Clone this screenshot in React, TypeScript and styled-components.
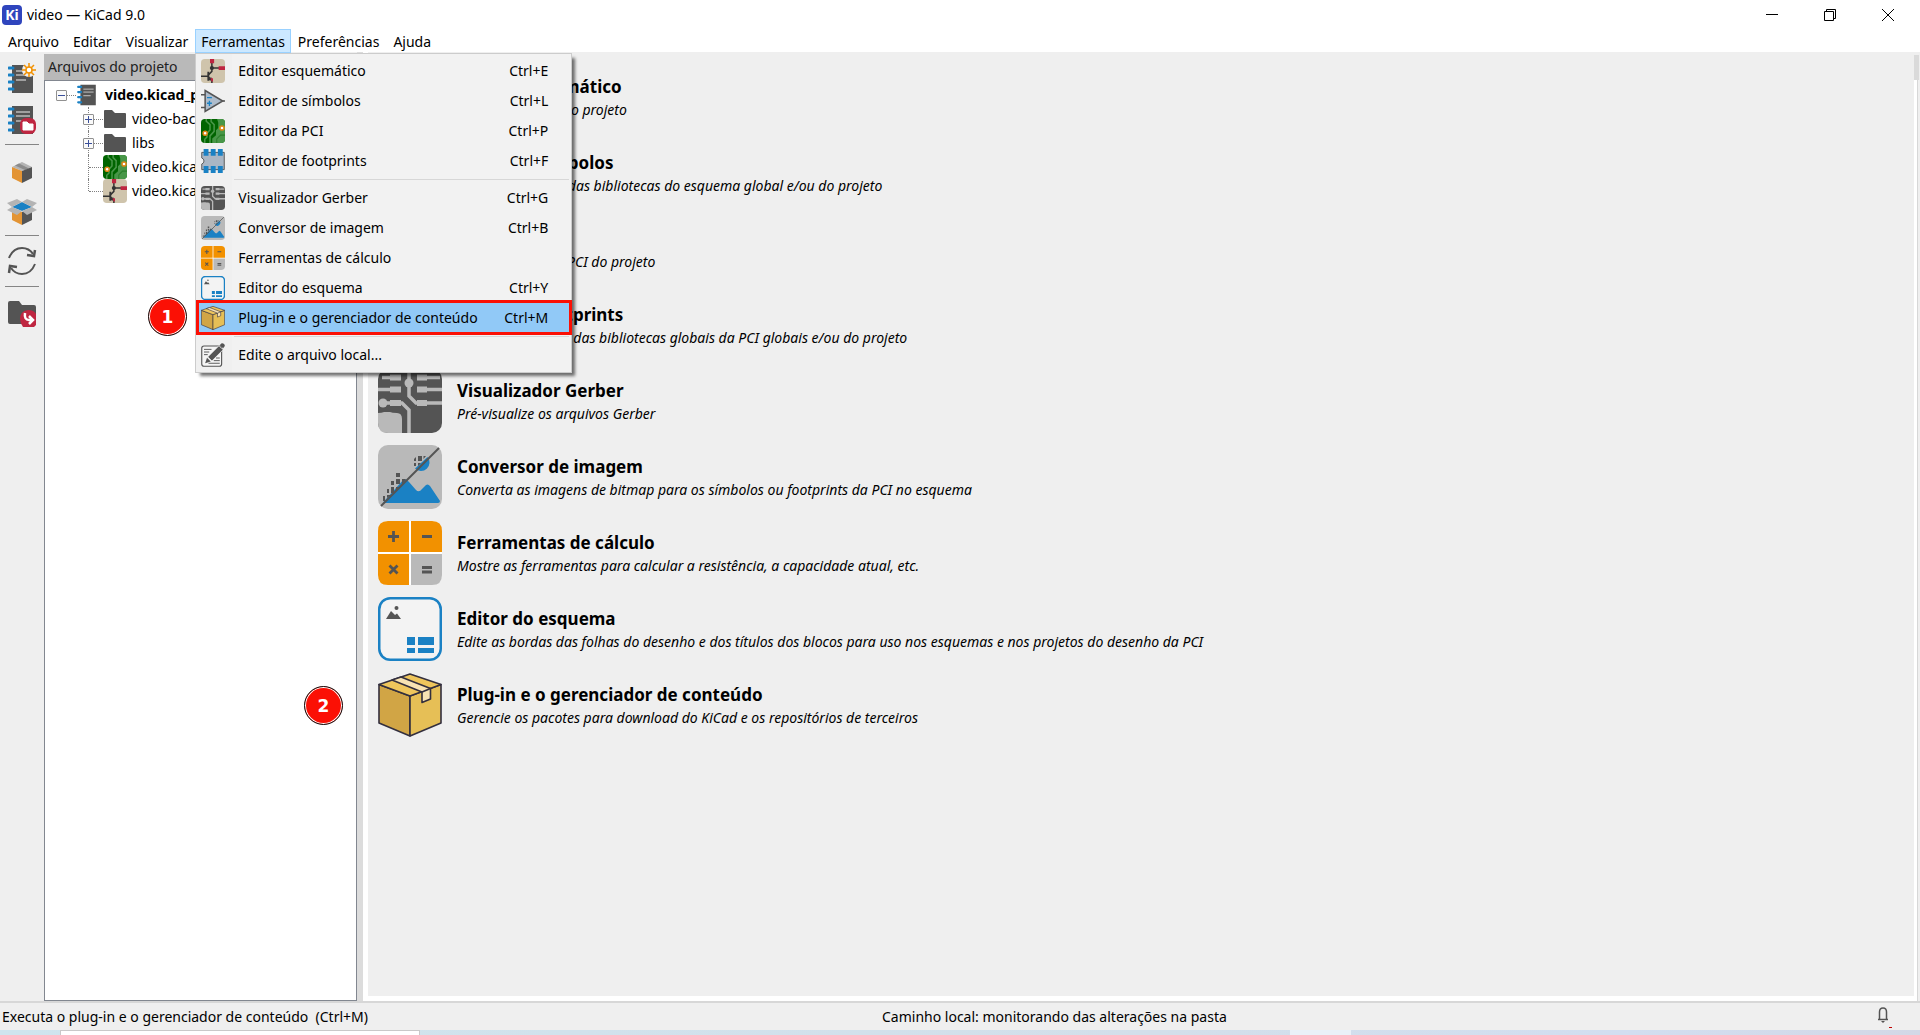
import React from "react";
import styled, { createGlobalStyle, css } from "styled-components";

const GlobalStyle = createGlobalStyle`
  * { box-sizing: border-box; }
  body {
    margin: 0;
    background: #efefef;
    color: #000;
    font-family: "Noto Sans", "Open Sans", sans-serif;
    font-size: 14px;
    line-height: 20px;
  }
  button { font: inherit; color: inherit; border: 0; padding: 0; background: none; text-align: left; }
  ul { list-style: none; margin: 0; padding: 0; }
  svg { display: block; flex: none; }
`;

/* ---------- icons ---------- */

type IconProps = { size?: number };
const DARK = "#545454";
const BLUE = "#1a81c4";
const RED = "#bf2641";
const ORANGE = "#f29100";
const GREY = "#b9b9b9";

const Svg64 = ({ size = 24, children }: IconProps & { children: React.ReactNode }) => (
  <svg width={size} height={size} viewBox="0 0 64 64" aria-hidden="true">
    {children}
  </svg>
);

const SchematicIcon = ({ size }: IconProps) => (
  <Svg64 size={size}>
    <rect width="64" height="64" rx="10" fill="#cfc4ac" />
    <path d="M29 8V33L19 43M29 24H50M0 46H19M20 48L29 57V64" fill="none" stroke="#333" strokeWidth="4" />
    <path d="M19.500 34V58" stroke="#333" strokeWidth="5" />
    <path d="M30 58L19 56L27 48Z" fill="#333" />
    <circle cx="29" cy="24" r="5.500" fill="#333" />
    <path d="M24 0H35V11H24ZM47 19H64V29H47ZM25 51H32V60H28Z" fill={RED} />
  </Svg64>
);

const SymbolIcon = ({ size }: IconProps) => (
  <Svg64 size={size}>
    <path d="M0 15H12M0 49H12M58 32H64" stroke={DARK} strokeWidth="4" />
    <path d="M11 4L58 32L11 60Z" fill="#aebccb" stroke={DARK} strokeWidth="4" />
    <path d="M16 23H29M16 38H29M22.500 31V45" stroke={BLUE} strokeWidth="3.500" />
  </Svg64>
);

const PcbIcon = ({ size }: IconProps) => (
  <Svg64 size={size}>
    <rect width="64" height="64" rx="10" fill="#006400" />
    <path d="M43 0H54Q64 0 64 10V54Q64 64 54 64H30V52L40 43V30L46 24V10Z" fill="#489648" />
    <path d="M14 0V6L24 15V29L16 38V48L10 54V64M27 0V7L35 15V33L24 45V64" fill="none" stroke="#489648" strokeWidth="4" />
    <path d="M64 43H52L42 53V64" fill="none" stroke="#2b7f2b" strokeWidth="3" />
    <circle cx="56" cy="24" r="5.500" fill="#fff" stroke="#dd8716" strokeWidth="4" />
    <circle cx="11" cy="38" r="5.500" fill="#fff" stroke="#dd8716" strokeWidth="4" />
  </Svg64>
);

const FootprintIcon = ({ size }: IconProps) => (
  <Svg64 size={size}>
    <path d="M2 9H62V55H2V40Q8 38 8 32Q8 26 2 24Z" fill="#aab6c4" stroke={DARK} strokeWidth="2.500" />
    <path d="M7 0H20V18H7ZM26 0H39V18H26ZM45 0H58V18H45ZM7 45H20V64H7ZM26 45H39V64H26ZM45 45H58V64H45Z" fill={BLUE} />
  </Svg64>
);

const GerberIcon = ({ size }: IconProps) => (
  <Svg64 size={size}>
    <rect width="64" height="64" rx="10" fill={DARK} />
    <path d="M0 44Q4 44 6 43H12Q14 44 19 44Q24 44 24 50V64H10Q0 64 0 54Z" fill={GREY} />
    <path d="M0 20.500H14M4 8.500H14M4 34H24L31 41V64M31 0V27L38 34H64M46 20.500H64M46 8.500H62" fill="none" stroke={GREY} strokeWidth="3.500" />
    <path d="M12 5.500H23V11.500H12ZM12 17.500H23V23.500H12ZM12 31H23V37H12ZM39 5.500H49V11.500H39ZM39 17.500H49V23.500H39ZM39 31H49V37H39Z" fill={GREY} />
    <circle cx="31" cy="14" r="4.500" fill={GREY} />
    <circle cx="5" cy="34" r="4.500" fill={GREY} />
  </Svg64>
);

const ConverterIcon = ({ size }: IconProps) => (
  <Svg64 size={size}>
    <rect width="64" height="64" rx="10" fill={GREY} />
    <path d="M5 57.500L26 34Q29 34 31 37L38 45Q41 48 44 44L48 40Q50 38.500 52 41L62 56Q62 58 60 58H6Z" fill={BLUE} />
    <path d="M49.500 12A8.500 8.500 0 0 1 37 23.500Z" fill={BLUE} />
    <path
      d="M36 14L38 12V16H36ZM40 11H44V16H40ZM45.500 11H48L45.500 14ZM36 18H38V21H36ZM40 18H43L40 21ZM18 28H22V32H18ZM18 34H22V39H18ZM24 34H28L24 39ZM13 36H16V40H13ZM13 42H16V48H13ZM18 42H22L18 46ZM9 44H11V48H9ZM9 50H13L9 53ZM5 51H7V56H5Z"
      fill={DARK}
    />
    <path d="M3 61L61 3" stroke={DARK} strokeWidth="2" />
  </Svg64>
);

const CalculatorIcon = ({ size }: IconProps) => (
  <Svg64 size={size}>
    <rect width="64" height="64" rx="10" fill="#fff" />
    <path d="M10 0H31V31H0V10Q0 0 10 0ZM33 0H54Q64 0 64 10V31H33ZM0 33H31V64H10Q0 64 0 54Z" fill={ORANGE} />
    <path d="M33 33H64V54Q64 64 54 64H33Z" fill={GREY} />
    <path
      d="M10 15.500H21M15.500 10V21M44 15.500H54M11.500 44.500L19.500 52.500M19.500 44.500L11.500 52.500M44 46.500H54M44 51H54"
      stroke={DARK}
      strokeWidth="2.800"
    />
  </Svg64>
);

const SheetIcon = ({ size }: IconProps) => (
  <Svg64 size={size}>
    <rect x="1.250" y="1.250" width="61.500" height="61.500" rx="11" fill="#f3f3f3" stroke={BLUE} strokeWidth={size === 24 ? 4 : 2.5} />
    <path d="M8 22L13 14L17 18L19 16.500L23 22Z" fill={DARK} />
    <circle cx="18.500" cy="11" r="2" fill={DARK} />
    <path d="M29 40H37V48H29ZM40 40H56V48H40ZM29 51H37V56H29ZM40 51H56V56H40Z" fill={BLUE} />
  </Svg64>
);

const PackageIcon = ({ size }: IconProps) => (
  <Svg64 size={size}>
    <g stroke="#332f3e" strokeWidth="1.600" strokeLinejoin="round">
      <path d="M1 11.500L32 23V63L1 50Z" fill="#d1a545" />
      <path d="M63 11.500L32 23V63L63 50Z" fill="#e6bf56" />
      <path d="M32 1L63 11.500L32 23L1 11.500Z" fill="#efc65c" />
      <path d="M14 7L23 4L52.500 15.500V26L44 29.500V19Z" fill="#f8e3b3" />
      <path d="M44 19L52.500 15.500" fill="none" />
    </g>
  </Svg64>
);

const EditFileIcon = ({ size }: IconProps) => (
  <Svg64 size={size}>
    <rect x="2" y="8" width="53" height="54" rx="6" fill="#f5f5f5" stroke={DARK} strokeWidth="3" />
    <path d="M8 17H28M8 24H22M8 31H18M40 40H50M34 47H50M20 54H50" stroke={DARK} strokeWidth="2.500" />
    <path d="M18 37L48 7L59 18L29 48Z" fill={DARK} stroke="#f5f5f5" strokeWidth="2" />
    <path d="M50 6L54 1Q58 -1 62 3Q65 7 62 10L59 14Z" fill={DARK} />
    <path d="M16 39L26 49L11 54Z" fill={DARK} />
  </Svg64>
);

const Notebook = () => (
  <>
    <path d="M4 1H25V29H4Z" fill={DARK} />
    <path d="M8 7H22M8 11H22M8 16H18" stroke="#ececec" strokeWidth="1" />
    <path d="M1 4H5M1 11H5M1 18H5M1 25H5" stroke={BLUE} strokeWidth="3" strokeLinecap="round" />
  </>
);

const ProjectIcon = () => (
  <svg width="20" height="22" viewBox="0 0 26 30" aria-hidden="true">
    <Notebook />
  </svg>
);

const NewProjectIcon = () => (
  <svg width="28" height="32" viewBox="0 0 28 32" aria-hidden="true">
    <g transform="translate(0 2)"><Notebook /></g>
    <circle cx="21" cy="8" r="7" fill="#efefef" />
    <path d="M21 1V15M14 8H28M16 3L26 13M26 3L16 13" stroke={ORANGE} strokeWidth="1.500" />
    <circle cx="21" cy="8" r="3" fill="#fff" stroke={ORANGE} strokeWidth="1.500" />
  </svg>
);

const OpenProjectIcon = () => (
  <svg width="28" height="32" viewBox="0 0 28 32" aria-hidden="true">
    <g transform="translate(0 2)"><Notebook /></g>
    <rect x="12" y="15" width="16" height="16" rx="6" fill={RED} />
    <path d="M15 19H19L21 21H25V27H15Z" fill="#fff" stroke="#fff" strokeLinejoin="round" />
  </svg>
);

const ArchiveIcon = () => (
  <svg width="22" height="22" viewBox="0 0 22 22" aria-hidden="true">
    <path d="M11 1L21 6L11 10L1 6Z" fill="#b4b4b4" />
    <path d="M4 4.500L8 2.500L18 7.500L14 9Z" fill="#8b8b8b" />
    <path d="M1 6L11 10V22L1 17Z" fill="#e39434" />
    <path d="M21 6L11 10V22L21 17Z" fill={DARK} />
  </svg>
);

const UnarchiveIcon = () => (
  <svg width="30" height="26" viewBox="0 0 30 26" aria-hidden="true">
    <path d="M5 10L15 13V26L5 21Z" fill="#e39434" />
    <path d="M25 10L15 13V26L25 21Z" fill={DARK} />
    <path d="M15 3L25 8L15 12L5 8Z" fill={BLUE} />
    <path d="M5 8L0 4L10 0L15 3ZM25 8L30 4L20 0L15 3ZM5 8L15 12L10 16L0 11ZM25 8L15 12L20 16L30 11Z" fill="#b4b4b4" />
  </svg>
);

const RefreshIcon = () => (
  <svg width="30" height="30" viewBox="0 0 30 30" aria-hidden="true" fill="none" stroke={DARK} strokeWidth="2">
    <path d="M2 12Q6 2 15 2Q22 2 26 8M28 18Q24 28 15 28Q8 28 4 22" />
    <path d="M28 4L27 10L20 9M2 27L3 20L10 21" strokeWidth="2.500" />
  </svg>
);

const BrowseIcon = () => (
  <svg width="30" height="28" viewBox="0 0 30 28" aria-hidden="true">
    <path d="M1 3Q1 1 3 1H12L15 5H27Q29 5 29 7V22Q29 24 27 24H3Q1 24 1 22Z" fill={DARK} />
    <path d="M16 27Q13 23 13 18.500Q13 11 21 10Q27 10 29 14V25L27 27Z" fill={RED} />
    <path d="M18 13Q17 20 22 20H25M22 16L26 20L22 24" fill="none" stroke="#fff" strokeWidth="2.500" />
  </svg>
);

const FolderIcon = () => (
  <svg width="24" height="24" viewBox="0 0 24 24" aria-hidden="true">
    <path d="M1 4Q1 3 2 3H9L12 6H22Q23 6 23 7V20Q23 21 22 21H2Q1 21 1 20Z" fill={DARK} />
  </svg>
);

const BellIcon = () => (
  <svg width="12" height="16" viewBox="0 0 12 16" aria-hidden="true">
    <path d="M2.500 12V5Q2.500 1 6 1Q9.500 1 9.500 5V12M1 12.500H11" fill="none" stroke={DARK} strokeWidth="1.500" />
    <path d="M4 14H8L6 16Z" fill={DARK} />
  </svg>
);

/* ---------- window frame ---------- */

const Window = styled.div`
  min-height: 100vh;
  display: flex;
  flex-direction: column;
`;

const TitleBar = styled.header`
  height: 29px;
  padding: 0 3px 0 2px;
  background: #fff;
  display: flex;
  align-items: center;
`;

const AppLogo = styled.span`
  width: 20px;
  height: 20px;
  border-radius: 4px;
  background: #2f45bd;
  color: #fff;
  font-size: 14px;
  line-height: 20px;
  font-weight: 700;
  text-align: center;
`;

const WindowTitle = styled.h1`
  flex: 1;
  margin: 0 0 0 5px;
  font-size: 14px;
  font-weight: 400;
`;

const CaptionButton = styled.button`
  width: 58px;
  height: 29px;
  display: grid;
  place-items: center;
`;

const MenuBar = styled.nav`
  height: 23px;
  padding-left: 1px;
  background: #fff;
  display: flex;
  align-items: flex-start;
`;

const MenuSlot = styled.div`
  position: relative;
`;

const MenuTitle = styled.button<{ $open?: boolean }>`
  height: 24px;
  padding: 1px ${(p) => (p.$open ? 5 : 6)}px 0;
  border: 1px solid transparent;
  ${(p) => p.$open && css`background: #cce8ff; border-color: #99d1ff;`}
`;

/* ---------- drop-down menu ---------- */

const Menu = styled.div`
  position: absolute;
  top: 24px;
  left: 0;
  z-index: 10;
  width: 377px;
  padding: 2px;
  border: 1px solid #ccc;
  background: linear-gradient(90deg, #f0f0f0 36px, #f2f2f2 36px);
  box-shadow: 4px 4px 3px -1px rgba(0, 0, 0, 0.55);
`;

const MenuItem = styled.button<{ $active?: boolean }>`
  position: relative;
  width: 100%;
  height: 30px;
  padding: 0 21px 0 3px;
  display: flex;
  align-items: center;
  gap: 13px;
  white-space: nowrap;
  ${(p) => p.$active && css`background: #91c9f7;`}
`;

const MenuLabel = styled.span`
  flex: 1;
`;

const MenuRule = styled.hr`
  height: 1px;
  margin: 3px 0 3px 36px;
  border: 0;
  background: #d7d7d7;
`;

const Highlight = styled.span`
  position: absolute;
  inset: -3px -3px -2px -2px;
  border: 3px solid #fb1005;
`;

const Badge = styled.span<{ $left: number; $top: number }>`
  position: absolute;
  left: ${(p) => p.$left}px;
  top: ${(p) => p.$top}px;
  z-index: 11;
  width: 39px;
  height: 39px;
  border: 1px solid #111;
  border-radius: 50%;
  background: #fb1005;
  box-shadow: inset 0 0 0 1px #fff;
  color: #fff;
  font-family: "DejaVu Sans", sans-serif;
  font-size: 17px;
  line-height: 38px;
  font-weight: 700;
  text-align: center;
`;

/* ---------- body ---------- */

const Body = styled.div`
  position: relative;
  flex: 1;
  display: flex;
`;

const ToolBar = styled.div`
  width: 44px;
  padding-top: 10px;
  display: flex;
  flex-direction: column;
  align-items: center;
`;

const Tool = styled.button<{ $height: number; $top?: boolean }>`
  height: ${(p) => p.$height}px;
  display: grid;
  place-items: ${(p) => (p.$top ? "start" : "center")} center;
`;

const ToolRule = styled.hr`
  width: 34px;
  height: 1px;
  margin: 0;
  border: 0;
  background: #858585;
`;

const ProjectPane = styled.aside`
  width: 313px;
  padding-top: 2px;
  display: flex;
  flex-direction: column;
`;

const PaneTitle = styled.h2`
  height: 26px;
  margin: 0;
  padding-left: 4px;
  background: #b9b9b9;
  color: #222;
  font-size: 14px;
  line-height: 26px;
  font-weight: 400;
`;

const Tree = styled.ul`
  flex: 1;
  && { padding: 2px 0; }
  border: 1px solid #828790;
  background: #fff;
  overflow: hidden;
`;

const TreeRow = styled.li<{ $root?: boolean }>`
  height: 24px;
  padding-left: ${(p) => (p.$root ? 11 : 38)}px;
  display: flex;
  align-items: center;
  white-space: nowrap;
  font-weight: ${(p) => (p.$root ? 700 : 400)};
`;

const Branch = styled.span<{ $child?: boolean; $last?: boolean }>`
  position: relative;
  width: 11px;
  height: 24px;
  display: grid;
  place-items: center;
  &::before {
    content: "";
    display: ${(p) => (p.$child ? "block" : "none")};
    position: absolute;
    left: 5px;
    top: 0;
    height: ${(p) => (p.$last ? 12 : 24)}px;
    border-left: 1px dotted #808080;
  }
`;

const Toggle = styled.button`
  position: relative;
  width: 11px;
  height: 11px;
  display: grid;
  place-items: center;
  border: 1px solid #919191;
  border-radius: 1px;
  background: #fafafa;
`;

const Twig = styled.span<{ $long?: boolean }>`
  width: ${(p) => (p.$long ? 14 : 9)}px;
  margin-left: ${(p) => (p.$long ? -5 : 0)}px;
  border-top: 1px dotted #808080;
`;

const TreeLabel = styled.span<{ $root?: boolean }>`
  margin-left: ${(p) => (p.$root ? 8 : 5)}px;
`;

const RootIcon = styled.span`
  margin-left: 1px;
`;

const Splitter = styled.div`
  width: 6px;
  background: #dcdcdc;
`;

const Launcher = styled.main`
  flex: 1;
  padding: 13px 10px;
  border: solid #fff;
  border-width: 0 0 5px 5px;
  background: #efefef;
  display: flex;
  flex-direction: column;
  gap: 12px;
`;

const LaunchButton = styled.button`
  display: flex;
  align-items: center;
  gap: 15px;
  white-space: nowrap;
`;

const LaunchText = styled.span`
  display: flex;
  flex-direction: column;
  padding-top: 2px;
`;

const LaunchTitle = styled.strong`
  font-size: 17px;
  line-height: 24px;
`;

const LaunchNote = styled.em`
  line-height: 22px;
`;

const EdgeBar = styled.div`
  width: 6px;
  padding-top: 3px;
  display: flex;
  flex-direction: column;
`;

const EdgeThumb = styled.div`
  width: 5px;
  height: 25px;
  background: #dadada;
`;

const EdgeTrack = styled.div`
  flex: 1;
  width: 4px;
  border-right: 1px solid #d7d7d7;
  background: #fff;
`;

/* ---------- footer ---------- */

const StatusBar = styled.footer`
  height: 29px;
  padding: 1px 31px 0 2px;
  border-top: 2px solid #d7d7d7;
  display: grid;
  grid-template-columns: 880px 1fr auto;
  align-items: center;
  white-space: pre;
`;

const Alerts = styled.button`
  position: relative;
  top: -2px;
  &::after {
    content: "";
    position: absolute;
    right: -3px;
    bottom: -5px;
    width: 3px;
    height: 1px;
    background: #c00000;
  }
`;

const TaskStrip = styled.div`
  height: 5px;
  padding-left: 60px;
  display: flex;
  background: linear-gradient(90deg, #cfe5ee, #d3dfea 60%, #d2def0 85%, #d3d8e6);
`;

const TaskField = styled.div`
  width: 360px;
  border: solid #c9c9c9;
  border-width: 1px 1px 0;
  background: #fff;
`;

const TaskActive = styled.div`
  width: 61px;
  margin-left: 870px;
  background: #eaf1f8;
`;

/* ---------- data ---------- */

const menuTitles = ["Arquivo", "Editar", "Visualizar", "Ferramentas", "Preferências", "Ajuda"];

type Entry = { icon: React.ComponentType<IconProps>; label: string; keys?: string; note?: string };

const tools: Entry[] = [
  { icon: SchematicIcon, label: "Editor esquemático", keys: "Ctrl+E", note: "Edite o esquema do projeto" },
  { icon: SymbolIcon, label: "Editor de símbolos", keys: "Ctrl+L", note: "Edite os símbolos das bibliotecas do esquema global e/ou do projeto" },
  { icon: PcbIcon, label: "Editor da PCI", keys: "Ctrl+P", note: "Edite o design da PCI do projeto" },
  { icon: FootprintIcon, label: "Editor de footprints", keys: "Ctrl+F", note: "Edite os footprints das bibliotecas globais da PCI globais e/ou do projeto" },
  { icon: GerberIcon, label: "Visualizador Gerber", keys: "Ctrl+G", note: "Pré-visualize os arquivos Gerber" },
  { icon: ConverterIcon, label: "Conversor de imagem", keys: "Ctrl+B", note: "Converta as imagens de bitmap para os símbolos ou footprints da PCI no esquema" },
  { icon: CalculatorIcon, label: "Ferramentas de cálculo", note: "Mostre as ferramentas para calcular a resistência, a capacidade atual, etc." },
  { icon: SheetIcon, label: "Editor do esquema", keys: "Ctrl+Y", note: "Edite as bordas das folhas do desenho e dos títulos dos blocos para uso nos esquemas e nos projetos do desenho da PCI" },
  { icon: PackageIcon, label: "Plug-in e o gerenciador de conteúdo", keys: "Ctrl+M", note: "Gerencie os pacotes para download do KiCad e os repositórios de terceiros" },
];

const localFile: Entry = { icon: EditFileIcon, label: "Edite o arquivo local..." };

const MenuEntry = ({ entry, active }: { entry: Entry; active?: boolean }) => {
  const Icon = entry.icon;
  return (
    <MenuItem role="menuitem" $active={active}>
      <Icon size={24} />
      <MenuLabel>{entry.label}</MenuLabel>
      {entry.keys && <span>{entry.keys}</span>}
      {active && <Highlight />}
    </MenuItem>
  );
};

const ToggleMark = ({ open }: { open?: boolean }) => (
  <Toggle aria-label={open ? "Recolher" : "Expandir"}>
    <svg width="7" height="7" viewBox="0 0 7 7" aria-hidden="true">
      <path d={open ? "M0 3.500H7" : "M0 3.500H7M3.500 0V7"} stroke="#3a4f9a" />
    </svg>
  </Toggle>
);

export default function App() {
  return (
    <Window>
      <GlobalStyle />
      <TitleBar>
        <AppLogo>Ki</AppLogo>
        <WindowTitle>video — KiCad 9.0</WindowTitle>
        <CaptionButton aria-label="Minimizar">
          <svg width="12" height="12" viewBox="0 0 12 12"><path d="M0 5.500H12" stroke="#000" /></svg>
        </CaptionButton>
        <CaptionButton aria-label="Restaurar">
          <svg width="12" height="12" viewBox="0 0 12 12" fill="none" stroke="#000">
            <path d="M.5 2.500H9.500V11.500H.5ZM2.500 2.500V.5H11.500V9.500H9.500" />
          </svg>
        </CaptionButton>
        <CaptionButton aria-label="Fechar">
          <svg width="12" height="12" viewBox="0 0 12 12"><path d="M0 0L12 12M12 0L0 12" stroke="#000" /></svg>
        </CaptionButton>
      </TitleBar>

      <MenuBar>
        {menuTitles.map((title) => {
          const open = title === "Ferramentas";
          return (
            <MenuSlot key={title}>
              <MenuTitle $open={open}>{title}</MenuTitle>
              {open && (
                <Menu role="menu">
                  {tools.slice(0, 4).map((t) => <MenuEntry key={t.label} entry={t} />)}
                  <MenuRule />
                  {tools.slice(4).map((t) => <MenuEntry key={t.label} entry={t} active={t.keys === "Ctrl+M"} />)}
                  <MenuRule />
                  <MenuEntry entry={localFile} />
                </Menu>
              )}
            </MenuSlot>
          );
        })}
      </MenuBar>

      <Body>
        <ToolBar>
          <Tool $height={32} aria-label="Novo projeto"><NewProjectIcon /></Tool>
          <Tool $height={50} aria-label="Abrir projeto"><OpenProjectIcon /></Tool>
          <ToolRule />
          <Tool $height={54} aria-label="Arquivar projeto"><ArchiveIcon /></Tool>
          <Tool $height={36} $top aria-label="Desarquivar projeto"><UnarchiveIcon /></Tool>
          <ToolRule />
          <Tool $height={50} aria-label="Atualizar"><RefreshIcon /></Tool>
          <ToolRule />
          <Tool $height={54} aria-label="Abrir pasta do projeto"><BrowseIcon /></Tool>
        </ToolBar>

        <ProjectPane>
          <PaneTitle>Arquivos do projeto</PaneTitle>
          <Tree>
            <TreeRow $root>
              <Branch><ToggleMark open /></Branch>
              <Twig />
              <RootIcon><ProjectIcon /></RootIcon>
              <TreeLabel $root>video.kicad_pro</TreeLabel>
            </TreeRow>
            <TreeRow>
              <Branch $child><ToggleMark /></Branch>
              <Twig />
              <FolderIcon />
              <TreeLabel>video-backups</TreeLabel>
            </TreeRow>
            <TreeRow>
              <Branch $child><ToggleMark /></Branch>
              <Twig />
              <FolderIcon />
              <TreeLabel>libs</TreeLabel>
            </TreeRow>
            <TreeRow>
              <Branch $child />
              <Twig $long />
              <PcbIcon size={24} />
              <TreeLabel>video.kicad_pcb</TreeLabel>
            </TreeRow>
            <TreeRow>
              <Branch $child $last />
              <Twig $long />
              <SchematicIcon size={24} />
              <TreeLabel>video.kicad_sch</TreeLabel>
            </TreeRow>
          </Tree>
        </ProjectPane>
        <Splitter />

        <Launcher>
          {tools.map(({ icon: Icon, label, note }) => (
            <LaunchButton key={label}>
              <Icon size={64} />
              <LaunchText>
                <LaunchTitle>{label}</LaunchTitle>
                <LaunchNote>{note}</LaunchNote>
              </LaunchText>
            </LaunchButton>
          ))}
        </Launcher>
        <EdgeBar>
          <EdgeThumb />
          <EdgeTrack />
        </EdgeBar>

        <Badge $left={148} $top={245}>1</Badge>
        <Badge $left={304} $top={634}>2</Badge>
      </Body>

      <StatusBar>
        <span>Executa o plug-in e o gerenciador de conteúdo  (Ctrl+M)</span>
        <span>Caminho local: monitorando das alterações na pasta</span>
        <Alerts aria-label="Notificações"><BellIcon /></Alerts>
      </StatusBar>
      <TaskStrip>
        <TaskField />
        <TaskActive />
      </TaskStrip>
    </Window>
  );
}
